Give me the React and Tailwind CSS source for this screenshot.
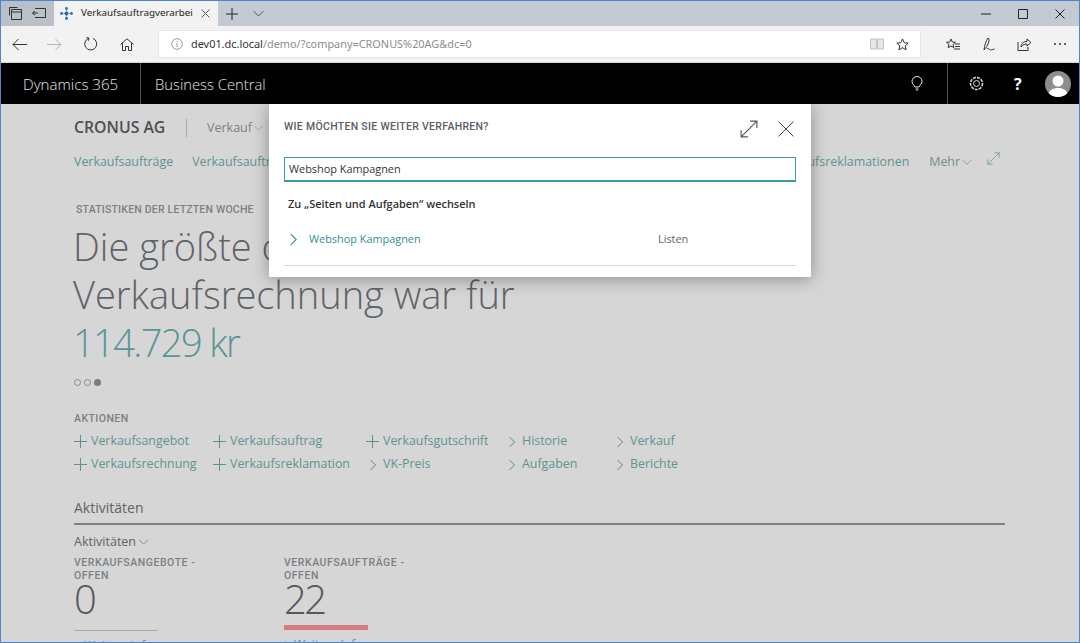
import React from "react";

const S = ({ w = 16, h = 16, vb = "0 0 16 16", c = "#333", sw = 1, children, className = "" }) => (
  <svg width={w} height={h} viewBox={vb} fill="none" stroke={c} strokeWidth={sw} className={className}>
    {children}
  </svg>
);

const Chevron = ({ c = "#6b7f80", w = 8, h = 12 }) => (
  <S w={w} h={h} vb="0 0 8 12" c={c}><path d="M1.5 1l5 5-5 5" /></S>
);
const ChevDown = ({ c = "#8a8a8a", w = 11, h = 7 }) => (
  <S w={w} h={h} vb="0 0 11 7" c={c}><path d="M.5 1l5 5 5-5" /></S>
);
const Plus = () => (
  <S w={13} h={13} vb="0 0 13 13" c="#5b9394"><path d="M6.5 0v13M0 6.5h13" /></S>
);
const Expand = ({ c, s }) => (
  <S w={s} h={s} vb="0 0 16 16" c={c}><path d="M1 15L15 1M9 1h6v6M1 9v6h6" /></S>
);

const Action = ({ plus, children }) => (
  <div className="flex items-center h-[23px] whitespace-nowrap">
    {plus ? <Plus /> : <span className="w-[13px] flex justify-center"><Chevron c="#5b8a8c" /></span>}
    <span className="ml-1 text-[12.4px] text-[#5f9394]">{children}</span>
  </div>
);

const Tile = ({ label1, label2, value, bar }) => (
  <div className="w-[210px]">
    <div className="mt-[1px] text-[10.5px] leading-[13px] font-medium tracking-[0.55px] text-[#7c7f84] font-['Roboto',sans-serif]">{label1}<br />{label2}</div>
    <div className="text-[40px] leading-[34px] font-light tracking-[-2.5px] text-[#55585c] h-[34px]">{value}</div>
    <div className={bar ? "mt-[9px] h-[5px] w-[84px] bg-[#d77c7c]" : "mt-[14px] h-px w-[84px] bg-[#a9a9a9]"} />
    <div className="mt-[6px] flex items-center gap-1 text-[12px] text-[#5f9394]">
      <Chevron c="#5b8a8c" w={6} h={10} /> Weitere Infos
    </div>
  </div>
);

export default function App() {
  return (
    <div className="relative w-[1080px] h-[643px] overflow-hidden bg-[#d6d6d6] font-['Open_Sans',sans-serif] border border-[#4b87c9]">
      {/* tab strip */}
      <div className="flex h-[25px] bg-[#c3cad2] items-stretch">
        <div className="flex w-[53px] bg-[#b9c0c8] items-center justify-around px-[3px]">
          <S w={13} h={13} vb="0 0 13 13" c="#333"><path d="M.5 8.5v-8h8M2.5 2.5h10v10h-10zM2.5 5h10" /></S>
          <S w={14} h={12} vb="0 0 14 12" c="#333"><path d="M3 .5h10.5v9H3M6 5H.5M3 3L.5 5 3 7" /></S>
        </div>
        <div className="flex items-center w-[164px] bg-[#f2f2f2] pl-[6px]">
          <svg width="13" height="13" viewBox="0 0 13 13" fill="#2e6fa8">
            <circle cx="6.5" cy="6.5" r="2" /><circle cx="6.5" cy="1.5" r="1.4" /><circle cx="6.5" cy="11.5" r="1.4" /><circle cx="1.5" cy="6.5" r="1.4" /><circle cx="11.5" cy="6.5" r="1.4" />
            <path d="M6.2 1h.6v11h-.6zM1 6.2h11v.6H1z" />
          </svg>
          <span className="ml-[8px] text-[9.8px] text-[#222] font-['Noto_Sans',sans-serif] w-[116px] whitespace-nowrap">Verkaufsauftragverarbei</span>
          <S w={9} h={9} vb="0 0 9 9" c="#555" className="ml-[4px]"><path d="M.5.5l8 8M8.5.5l-8 8" /></S>
        </div>
        <div className="flex items-center pl-[8px] gap-[15px]">
          <S w={12} h={12} vb="0 0 12 12" c="#222"><path d="M6 0v12M0 6h12" /></S>
          <ChevDown c="#555" />
        </div>
        <div className="flex-1" />
        <div className="flex items-center gap-[27px] pr-[14px]">
          <S w={10} h={2} vb="0 0 10 2" c="#222"><path d="M0 1h10" /></S>
          <S w={10} h={10} vb="0 0 10 10" c="#222"><path d="M.5.5h9v9h-9z" /></S>
          <S w={10} h={10} vb="0 0 10 10" c="#222"><path d="M.5.5l9 9M9.5.5l-9 9" /></S>
        </div>
      </div>
      {/* toolbar */}
      <div className="flex h-[37px] bg-[#f2f2f2] items-center border-b border-[#d4d4d4]">
        <div className="flex items-center w-[157px] pl-[11px]">
          <S w={15} h={13} vb="0 0 15 13" c="#333"><path d="M15 6.5H1M6.5 1L1 6.5 6.5 12" /></S>
          <S w={15} h={13} vb="0 0 15 13" c="#b5b5b5" className="ml-[20px]"><path d="M0 6.5h14M8.5 1L14 6.5 8.5 12" /></S>
          <S w={14} h={14} vb="0 0 14 14" c="#333" className="ml-[22px]"><path d="M5 1.2A6 6 0 1 0 9 1.4M2.5 .5L5 1.2 4.3 3.8" /></S>
          <S w={14} h={13} vb="0 0 14 13" c="#333" className="ml-[22px]"><path d="M.5 6.5L7 .8l6.5 5.7M2.5 5v7.5h3v-4h3v4h3V5" /></S>
        </div>
        <div className="flex items-center w-[763px] h-[28px] bg-white border border-[#e6e6e6] pl-[12px] text-[10.9px] font-['Noto_Sans',sans-serif]">
          <S w={12} h={12} vb="0 0 12 12" c="#999"><circle cx="6" cy="6" r="5.3" /><path d="M6 5v4M6 3v1" /></S>
          <span className="ml-[8px] text-[#333]">dev01.dc.local</span>
          <span className="text-[#8c8c8c]">/demo/?company=CRONUS%20AG&amp;dc=0</span>
          <span className="flex-1" />
          <S w={14} h={12} vb="0 0 14 12" c="#c4c4c4" className="mr-[12px]"><path d="M.5 1h6v10h-6zM7.5 1h6v10h-6z" fill="#e6e6e6" /></S>
          <S w={13} h={13} vb="0 0 13 13" c="#333" className="mr-[11px]"><path d="M6.5 1l1.7 3.7 4 .4-3 2.7.9 4-3.6-2.1-3.6 2.1.9-4-3-2.7 4-.4z" /></S>
        </div>
        <div className="flex items-center pl-[25px]">
          <S w={14} h={13} vb="0 0 14 13" c="#333"><path d="M5 1l1.3 3 3.2.3-2.4 2.1.7 3.2L5 8 2.2 9.6l.7-3.2L.5 4.300l3.200-.3zM9 6h5M9 8.500h5M8 11h6" /></S>
          <S w={14} h={15} vb="0 0 14 15" c="#333" className="ml-[22px]"><path d="M6 1C4 4 2.500 8 2 13c2-2 4-5 5-9 .3-1.500-.2-3-1-3zM5 12c1-1 2-.500 2.500 .5 1 .7 2.500 .3 5-.5" /></S>
          <S w={14} h={13} vb="0 0 14 13" c="#333" className="ml-[21px]"><path d="M1 4v8.500h10V9M4 9c0-4 3-5.500 6-5.500V1l4 3.500L10 8V6C7 6 5 7 4 9z" /></S>
          <span className="ml-[23px] flex gap-[3px]">
            <span className="w-[2px] h-[2px] rounded-full bg-[#333]" />
            <span className="w-[2px] h-[2px] rounded-full bg-[#333]" />
            <span className="w-[2px] h-[2px] rounded-full bg-[#333]" />
          </span>
        </div>
      </div>
      {/* nav bar */}
      <div className="flex h-[41px] bg-black items-stretch text-[#e4e4e4]">
        <div className="flex items-center w-[140px] pl-[22px] border-r border-[#555] text-[15.1px] font-light whitespace-nowrap pt-[1px]">Dynamics 365</div>
        <div className="flex items-center pl-[14px] text-[14.8px] font-light whitespace-nowrap pt-[1px]">Business Central</div>
        <div className="flex-1" />
        <div className="flex items-center w-[71px] pl-[34px] border-r border-[#555]">
          <S w={12} h={15} vb="0 0 12 15" c="#eee"><path d="M4 11C3 8.500 1 8 1 5.500a5 5 0 0 1 10 0C11 8 9 8.500 8 11zM4.500 13h3M5.500 14.500h1" /></S>
        </div>
        <div className="flex items-center w-[131px] pl-[21px]">
          <S w={15} h={15} vb="0 0 15 15" c="#ddd"><circle cx="7.500" cy="7.500" r="3" /><circle cx="7.500" cy="7.500" r="6" strokeDasharray="3 1" strokeWidth="1.500" /></S>
          <span className="ml-[30px] w-[9px] text-[16px] font-bold text-white">?</span>
          <span className="ml-[22px] relative flex w-[26px] h-[26px] rounded-full overflow-hidden bg-[#8d8d8d]">
            <svg width="26" height="26" viewBox="0 0 26 26" fill="#fff"><circle cx="13" cy="10" r="5.500" /><path d="M3 26c0-7 5-9 10-9s10 2 10 9z" /></svg>
          </span>
        </div>
      </div>

      {/* page */}
      <div className="pl-[73px] pr-[74px]">
        <div className="flex items-center h-[47px] pt-[1px]">
          <span className="text-[15.8px] font-semibold text-[#4d4f52] w-[112px]">CRONUS AG</span>
          <span className="w-px h-[18px] bg-[#a9a9a9]" />
          <span className="ml-[20px] text-[12.500px] text-[#7d8084]">Verkauf</span>
          <span className="ml-[2px]"><ChevDown c="#a0a0a0" w={9} h={6} /></span>
        </div>
        <div className="flex items-center h-[18px] mt-[2px] pr-[5px] text-[12.4px] text-[#5f9394] whitespace-nowrap">
          <span>Verkaufsaufträge</span>
          <span className="ml-[19px]">Verkaufsaufträge verarbeiten</span>
          <span className="flex-1" />
          <span>Verkaufsreklamationen</span>
          <span className="ml-[20px] text-[#6f8f90]">Mehr</span>
          <span className="ml-[2px]"><ChevDown c="#7d9a9b" w={10} h={6} /></span>
          <span className="ml-[15px] -mt-[7px]"><Expand c="#6a9a9b" s={13} /></span>
        </div>
        <div className="mt-[32px] pl-[2px] text-[10.500px] leading-[14px] font-medium tracking-[0.2px] text-[#7c7f84] font-['Roboto',sans-serif]">STATISTIKEN DER LETZTEN WOCHE</div>
        <div className="mt-[5px] -ml-[1px] text-[38px] leading-[48px] font-light text-[#606367] whitespace-nowrap">
          Die größte offene<br />Verkaufsrechnung war für<br /><span className="text-[#5a9596] tracking-[-1.6px]">114.729 kr</span>
        </div>
        <div className="flex gap-[3px] mt-[13px] h-[7px] items-center">
          <span className="w-[7px] h-[7px] rounded-full border border-[#8b8b8b]" />
          <span className="w-[7px] h-[7px] rounded-full border border-[#8b8b8b]" />
          <span className="w-[7px] h-[7px] rounded-full bg-[#7b7b82]" />
        </div>
        <div className="mt-[26px] text-[10.500px] leading-[14px] font-medium tracking-[0.45px] text-[#7c7f84] font-['Roboto',sans-serif]">AKTIONEN</div>
        <div className="grid grid-cols-[139px_153px_139px_108px_120px] mt-[4px]">
          <Action plus>Verkaufsangebot</Action>
          <Action plus>Verkaufsauftrag</Action>
          <Action plus>Verkaufsgutschrift</Action>
          <Action>Historie</Action>
          <Action>Verkauf</Action>
          <Action plus>Verkaufsrechnung</Action>
          <Action plus>Verkaufsreklamation</Action>
          <Action>VK-Preis</Action>
          <Action>Aufgaben</Action>
          <Action>Berichte</Action>
        </div>
        <div className="mt-[22px] h-[27px] text-[14px] leading-[20px] text-[#606367] border-b-2 border-[#7b8188] pt-0">Aktivitäten</div>
        <div className="flex items-center gap-[2px] mt-[8px] h-[18px] text-[12.5px] text-[#606367]">
          Aktivitäten <ChevDown c="#7d7d7d" w={11} h={6} />
        </div>
        <div className="flex mt-[4px]">
          <Tile label1="VERKAUFSANGEBOTE -" label2="OFFEN" value="0" />
          <Tile label1="VERKAUFSAUFTRÄGE -" label2="OFFEN" value="22" bar />
        </div>
      </div>

      {/* dialog */}
      <div className="absolute left-[268px] top-[103px] w-[542px] h-[173px] bg-white px-[15px] shadow-[0_2px_16px_rgba(0,0,0,0.35)]">
        <div className="flex items-center h-[46px]">
          <span className="text-[10.500px] font-medium tracking-[0.3px] text-[#5b5e63] font-['Roboto',sans-serif]">WIE MÖCHTEN SIE WEITER VERFAHREN?</span>
          <span className="flex-1" />
          <span className="mt-[3px] mr-[20px]"><Expand c="#555" s={18} /></span>
          <S w={16} h={16} vb="0 0 16 16" c="#444" className="mt-[3px] mr-[2px]"><path d="M.5.500l15 15M15.500.500l-15 15" /></S>
        </div>
        <div className="h-[25px] mt-[7px] border border-[#3c9a9a] border-b-2 flex items-center px-[4px] text-[10.9px] text-[#333]">Webshop Kampagnen</div>
        <div className="mt-[13px] pl-[4px] h-[18px] leading-[18px] text-[10.95px] font-semibold text-[#333]">Zu „Seiten und Aufgaben“ wechseln</div>
        <div className="flex items-center mt-[17px] h-[18px] text-[10.9px]">
          <span className="ml-[5px] w-[20px]"><Chevron c="#2f8f8f" w={9} h={13} /></span>
          <span className="text-[#2f8f8f] w-[349px]">Webshop Kampagnen</span>
          <span className="text-[#666]">Listen</span>
        </div>
        <div className="mt-[17px] h-px bg-[#d9d9d9]" />
      </div>
    </div>
  );
}
